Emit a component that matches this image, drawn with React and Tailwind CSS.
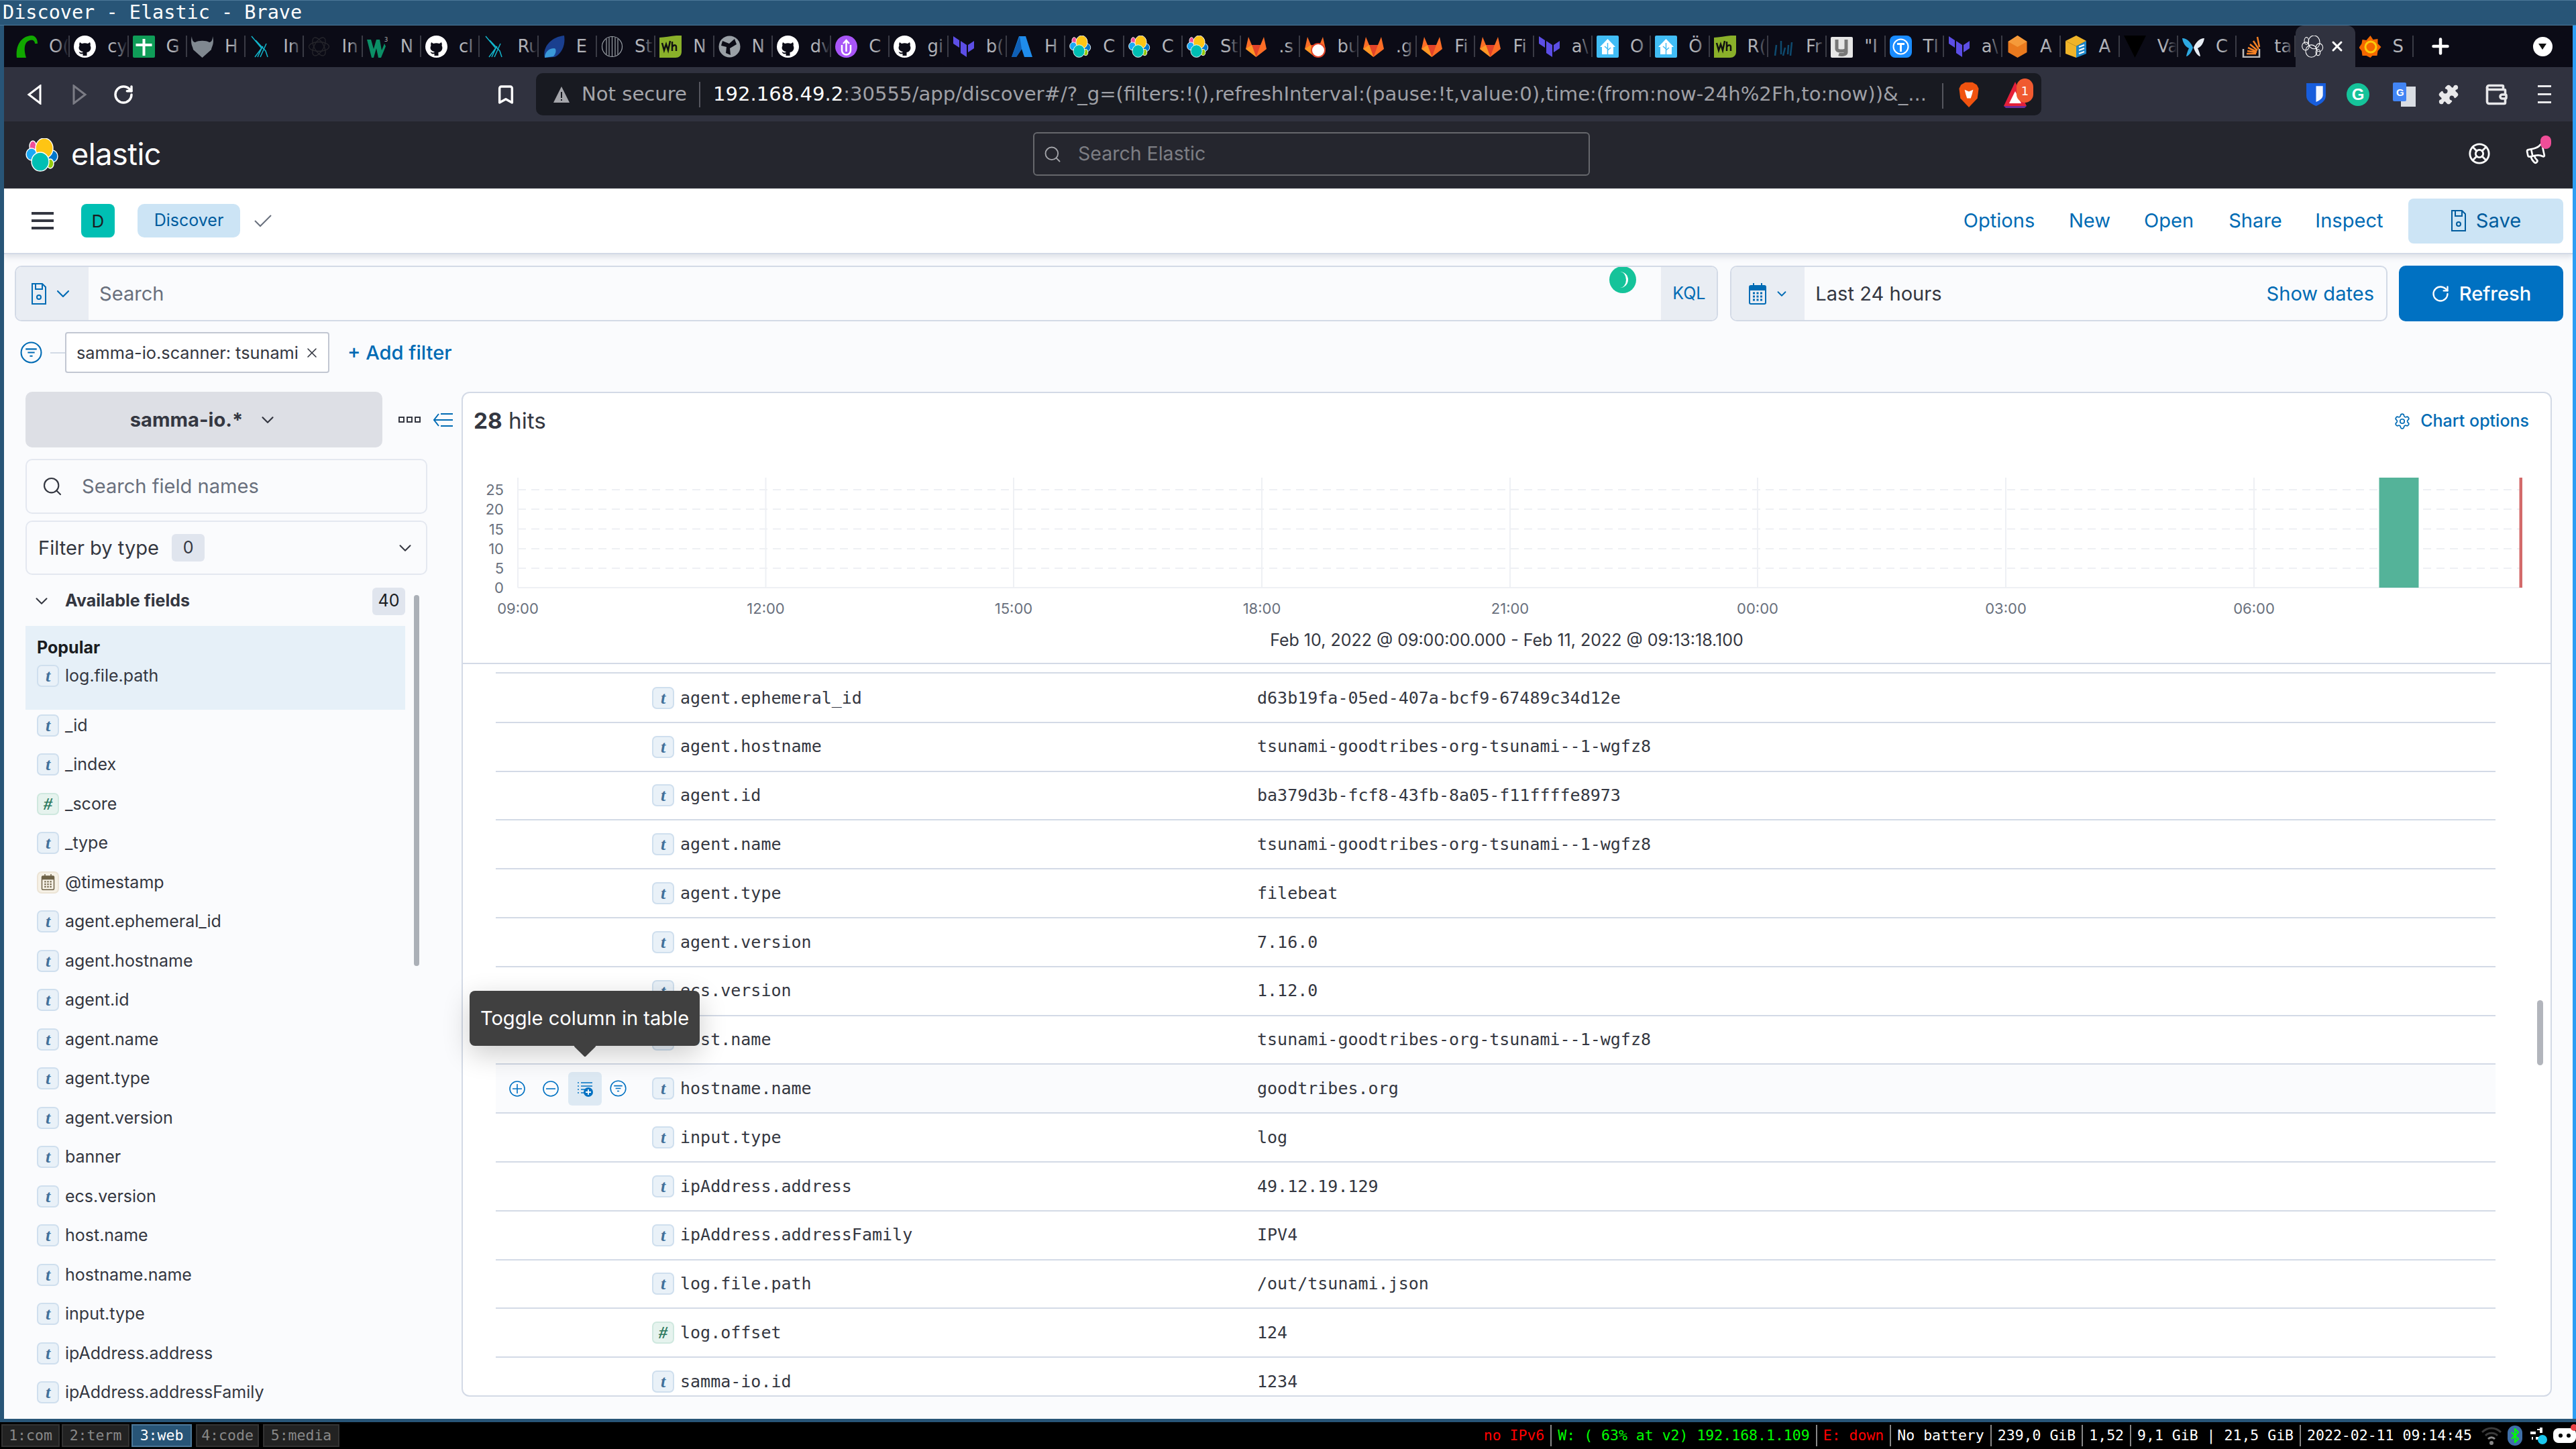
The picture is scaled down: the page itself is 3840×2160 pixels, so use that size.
import React from "react";
import {
  Bookmark,
  ChevronDown,
  Plus,
  RotateCw,
  Search,
  Settings,
  X,
  LifeBuoy,
  Megaphone,
  Wallet,
  Puzzle,
} from "lucide-react";

const sans = "font-['Inter','Liberation_Sans',sans-serif]";
const mono = "font-['DejaVu_Sans_Mono',monospace]";

const GitHub = () => (
  <svg viewBox="0 0 33 33" className="w-[33px] h-[33px]">
    <circle cx="16.5" cy="16.5" r="16.5" fill="#fff" />
    <path d="M9 10l3 2c3-1 6-1 9 0l3-2c1 2 1 4 .5 5 2 3 1 9-5 10v5h-6v-3c-3 1-5 0-6-3 2 1 3 2 6 1v-1c-6-1-7-6-5-9-.5-1-.5-3 .5-5z" fill="#0b0b16" />
  </svg>
);

const Elastic = ({ outline }) => {
  const s = outline ? { fill: "none", stroke: "#fff", strokeWidth: 1.6 } : { stroke: "#fff", strokeWidth: 1.4 };
  return (
    <svg viewBox="0 0 50 50" className="w-full h-full">
      <ellipse cx="11" cy="12" rx="5" ry="8" fill="#f04e98" {...s} />
      <ellipse cx="9" cy="24" rx="8" ry="9" fill="#1ba9f5" {...s} />
      <ellipse cx="40" cy="27" rx="8" ry="9" fill="#0077cc" {...s} />
      <ellipse cx="37" cy="38" rx="5" ry="7" fill="#93c90e" {...s} />
      <ellipse cx="28" cy="15" rx="13" ry="15" fill="#fec514" {...s} />
      <ellipse cx="22" cy="35" rx="13" ry="14" fill="#00bfb3" {...s} />
    </svg>
  );
};

const Terraform = () => (
  <svg viewBox="0 0 33 33" className="w-[33px] h-[33px]">
    <path d="M1 1l9 6v11L1 12zM12 8l9 6v18l-9-6zM23 14l9-6v11l-9 6z" fill="#5c4ee5" />
  </svg>
);

const GitLab = ({ bad }) => (
  <svg viewBox="0 0 33 33" className="w-[33px] h-[33px]">
    <path d="M16.5 32L1 20 5 2l5 12h13l5-12 4 18z" fill="#fc6d26" />
    <path d="M16.5 32l-6.500-18h13z" fill="#e24329" />
    <path d="M16.5 32L1 20l9-6z" fill="#fca326" opacity=".8" />
    {bad && <circle cx="21" cy="22" r="10" fill="#fff" stroke="#e24329" strokeWidth="2" />}
  </svg>
);

const HomeAssistant = () => (
  <svg viewBox="0 0 33 33" className="w-[33px] h-[33px]">
    <rect width="33" height="33" rx="2" fill="#41bdf5" />
    <path d="M16.500 5L28 17h-3v11H8V17H5z" fill="#fff" />
    <path d="M16.500 11v17M12 16l4.500 4M21 18l-4.500 4" stroke="#41bdf5" strokeWidth="1.500" />
  </svg>
);

const WiresharkBox = () => (
  <svg viewBox="0 0 33 33" className="w-[33px] h-[33px]">
    <path d="M0 3c10 0 22-4 33-3v24c0 6-4 9-9 9H0z" fill="#8ab02a" />
    <path d="M4 11l3 11 3-9 3 9 3-14M19 9v14M19 17c3-4 6-3 6 0v6" fill="none" stroke="#111" strokeWidth="2.500" />
  </svg>
);

// favicons of the tab strip, a small sketch each
const favicons = {
  swoosh: (
    <svg viewBox="0 0 33 33" className="w-[33px] h-[33px]">
      <path d="M2 33C0 15 8 1 24 0c6 0 9 6 9 12h-4c0-4-3-6-7-5C13 9 12 20 16 33z" fill="#11a800" />
    </svg>
  ),
  github: <GitHub />,
  cross: (
    <svg viewBox="0 0 33 33" className="w-[33px] h-[33px]">
      <rect width="33" height="33" rx="2" fill="#0f9d58" />
      <path d="M14.500 5h4v7h10v4h-10v14h-4V16h-10v-4h10z" fill="#fff" />
    </svg>
  ),
  viking: (
    <svg viewBox="0 0 33 33" className="w-[33px] h-[33px]">
      <path d="M1 1c0 7 3 9 5 9 5-3 16-3 21 0 2 0 5-2 5-9 3 12-2 16-2 20L16.500 33 3 21C3 17-2 13 1 1z" fill="#808890" />
    </svg>
  ),
  kube: (
    <svg viewBox="0 0 33 33" className="w-[33px] h-[33px]" fill="none" stroke="#12b5cb" strokeWidth="1.500">
      <path d="M3 1l15 18-6 13M9 7l15 16 3 9M8 32l12-16M16 32l9-20" />
    </svg>
  ),
  atom: (
    <svg viewBox="0 0 33 33" className="w-[33px] h-[33px]" fill="none" stroke="#26262c" strokeWidth="1.300">
      <ellipse cx="16.500" cy="16.500" rx="15" ry="7" />
      <ellipse cx="16.500" cy="16.500" rx="15" ry="7" transform="rotate(60 16.500 16.500)" />
      <ellipse cx="16.500" cy="16.500" rx="15" ry="7" transform="rotate(120 16.500 16.500)" />
    </svg>
  ),
  w3: (
    <svg viewBox="0 0 33 33" className="w-[33px] h-[33px]">
      <path d="M0 6h6l4 14 4-14h5l3 16 4-10 2 4-7 17h-4l-3-14-4 14H7z" fill="#0b8f66" />
      <text x="26" y="9" fontSize="9" fill="#bbb">3</text>
    </svg>
  ),
  wave: (
    <svg viewBox="0 0 33 33" className="w-[33px] h-[33px]">
      <path d="M3 33C-1 18 12 2 32 0c2 12-2 26-14 32z" fill="#1a3f8f" />
      <path d="M3 33c0-8 6-14 14-14 4 0 3 8-1 12z" fill="#3a9ad9" />
    </svg>
  ),
  stripes: (
    <svg viewBox="0 0 33 33" className="w-[33px] h-[33px]" fill="none" stroke="#9aa0a6" strokeWidth="1.200">
      <circle cx="16.500" cy="16.500" r="15" />
      <path d="M8 5v23M12 3v27M16.500 2v29M21 3v27M25 5v23" />
    </svg>
  ),
  wh: <WiresharkBox />,
  globe: (
    <svg viewBox="0 0 33 33" className="w-[33px] h-[33px]">
      <circle cx="16.500" cy="16.500" r="16" fill="#9aa0a6" />
      <path d="M6 8l10 4 8-7 3 8-10 6 1 10-7-3 1-9-8-2z" fill="#0b0b16" />
    </svg>
  ),
  upload: (
    <svg viewBox="0 0 33 33" className="w-[33px] h-[33px]">
      <circle cx="16.500" cy="16.500" r="16.500" fill="#a855f7" />
      <path d="M10 14v8a6.500 6.500 0 0 0 13 0v-8M16.500 24V7M12 12l4.500-5 4.500 5" fill="none" stroke="#fff" strokeWidth="2.500" />
    </svg>
  ),
  terraform: <Terraform />,
  azure: (
    <svg viewBox="0 0 33 33" className="w-[33px] h-[33px]">
      <path d="M12 1h10l10 31H20L16 20l-8 12H1z" fill="#1f8ceb" />
      <path d="M13 1L1 32h7l8-12z" fill="#0f5fb5" />
    </svg>
  ),
  elastic: (
    <div className="w-[33px] h-[33px]">
      <Elastic />
    </div>
  ),
  gitlab: <GitLab />,
  gitlabBad: <GitLab bad />,
  ha: <HomeAssistant />,
  inkblue: (
    <svg viewBox="0 0 33 33" className="w-[33px] h-[33px]" fill="none" stroke="#0e4a6e" strokeWidth="2.500">
      <path d="M6 14l-2 16M13 8v20M19 18l-3 12M24 14l-1 14M29 10l-2 20" />
    </svg>
  ),
  yBox: (
    <svg viewBox="0 0 33 33" className="w-[33px] h-[33px]">
      <rect y="2" width="33" height="31" rx="2" fill="#e6e6e6" />
      <path d="M9 6v14c0 4 14 4 14 0V6M23 20v5c0 4-8 4-11 3" fill="none" stroke="#777" strokeWidth="5" />
    </svg>
  ),
  tBlue: (
    <svg viewBox="0 0 33 33" className="w-[33px] h-[33px]">
      <rect width="33" height="33" rx="8" fill="#1a8cff" />
      <circle cx="16.500" cy="16.500" r="11" fill="none" stroke="#fff" strokeWidth="2" />
      <path d="M11 11h11v3h-4v10h-3V14h-4z" fill="#fff" />
    </svg>
  ),
  hex: (
    <svg viewBox="0 0 33 33" className="w-[33px] h-[33px]">
      <path d="M16.500 0l14 9v16l-14 8-14-8V9z" fill="#ea7a1e" />
      <path d="M2.500 9l14 8 14-8-14-9z" fill="#f59a3a" />
    </svg>
  ),
  box: (
    <svg viewBox="0 0 33 33" className="w-[33px] h-[33px]">
      <path d="M1 8L17 0l15 8-15 8z" fill="#f0b429" />
      <path d="M1 8l16 8v17L1 27z" fill="#f0b429" />
      <path d="M17 16l15-8v19l-15 6z" fill="#1c86c8" />
      <path d="M21 17l8-3M21 22l8-3M21 27l8-3" stroke="#fff" strokeWidth="2" />
    </svg>
  ),
  vault: (
    <svg viewBox="0 0 33 33" className="w-[33px] h-[33px]">
      <path d="M0 0h33L16.500 33z" fill="#000" />
    </svg>
  ),
  butterfly: (
    <svg viewBox="0 0 33 33" className="w-[33px] h-[33px]">
      <path d="M0 4c8 0 14 8 16 14-2 7-7 13-10 13 1-5 2-8 4-12C5 17 1 11 0 4z" fill="#2da8e0" />
      <path d="M33 4c-8 0-14 8-16 14 2 7 7 13 10 13-1-5-2-8-4-12 5-2 9-8 10-15z" fill="#e8eef5" />
    </svg>
  ),
  so: (
    <svg viewBox="0 0 33 33" className="w-[33px] h-[33px]" fill="none">
      <path d="M4 20v12h24V20" stroke="#bcbbbb" strokeWidth="2.500" />
      <path d="M9 27h14M10 23l14 2M11 18l13 6M14 13l11 9M19 8l8 12M25 2l3 15" stroke="#f48024" strokeWidth="2.500" />
    </svg>
  ),
  grafana: (
    <svg viewBox="0 0 33 33" className="w-[33px] h-[33px]">
      <path d="M16.500 0l4 6 7-1 0 7 5 5-5 6-1 7-7 0-3 3-6-3-6 0-1-7-4-5 4-6 1-6 6 1z" fill="#f46800" />
      <circle cx="17" cy="17" r="8" fill="none" stroke="#fbca0a" strokeWidth="3" />
    </svg>
  ),
};

const tabs = [
  ["swoosh", "O("], ["github", "cy"], ["cross", "G"], ["viking", "H"], ["kube", "In"], ["atom", "In"],
  ["w3", "N"], ["github", "cl"], ["kube", "Ru"], ["wave", "E"], ["stripes", "St"], ["wh", "N"],
  ["globe", "N"], ["github", "dv"], ["upload", "C"], ["github", "gi"], ["terraform", "b("], ["azure", "H"],
  ["elastic", "C"], ["elastic", "C"], ["elastic", "St"], ["gitlab", ".s"], ["gitlabBad", "bu"], ["gitlab", ".g"],
  ["gitlab", "Fi"], ["gitlab", "Fi"], ["terraform", "a\\"], ["ha", "O"], ["ha", "Ö"], ["wh", "R("],
  ["inkblue", "Fr"], ["yBox", "\"I"], ["tBlue", "Tl"], ["terraform", "a\\"], ["hex", "A"], ["box", "A"],
  ["vault", "Va"], ["butterfly", "C"], ["so", "ta"],
];

const TabStrip = () => (
  <div className="h-[62px] bg-[#0b0b16] flex pl-[11px] shrink-0">
    {tabs.map(([icon, label], i) => (
      <div key={i} className="w-[87.3px] h-[62px] shrink-0 flex items-center pl-[6px] overflow-hidden relative">
        <div className="w-[33px] h-[33px] shrink-0">{favicons[icon]}</div>
        <span className="ml-[17px] text-[26px] leading-none text-[#b4b5ba] font-['DejaVu_Sans',sans-serif] whitespace-nowrap">{label}</span>
        <div className="absolute right-[2px] top-0 h-[62px] w-[18px] bg-linear-to-r from-transparent to-[#0b0b16]" />
        <div className="absolute right-0 top-[15px] h-[32px] w-[2px] bg-[#3a3b45]" />
      </div>
    ))}
    <div className="w-[89px] h-[62px] shrink-0 bg-[#30323f] rounded-t-[12px] flex items-center pl-[9px]">
      <div className="w-[33px] h-[33px]">
        <Elastic outline />
      </div>
      <X size={24} strokeWidth={3} className="ml-[8px] text-white" />
    </div>
    <div className="w-[87px] h-[62px] shrink-0 flex items-center pl-[6px] relative">
      <div className="w-[33px] h-[33px] shrink-0">{favicons.grafana}</div>
      <span className="ml-[17px] text-[26px] leading-none text-[#b4b5ba] font-['DejaVu_Sans',sans-serif]">S</span>
      <div className="absolute right-0 top-[15px] h-[32px] w-[2px] bg-[#3a3b45]" />
    </div>
    <Plus size={36} strokeWidth={3} className="ml-[22px] mt-[13px] text-white" />
    <div className="ml-[120px] mt-[17px] w-[29px] h-[29px] rounded-full bg-white flex items-center justify-center">
      <div className="w-0 h-0 border-l-[6px] border-r-[6px] border-t-[9px] border-l-transparent border-r-transparent border-t-[#111]" />
    </div>
  </div>
);

const BrowserBar = () => (
  <div className="h-[81px] bg-[#30323f] flex items-center shrink-0 relative">
    <svg viewBox="0 0 24 30" className="w-[24px] h-[30px] ml-[34px]" fill="none" stroke="#fff" strokeWidth="3">
      <path d="M20 2v26L3 15z" />
    </svg>
    <svg viewBox="0 0 24 30" className="w-[24px] h-[30px] ml-[42px]" fill="none" stroke="#7b7c85" strokeWidth="3">
      <path d="M4 2v26l17-13z" />
    </svg>
    <RotateCw size={32} strokeWidth={2.6} className="ml-[38px] text-white" />
    <Bookmark size={32} strokeWidth={2.6} className="ml-[538px] text-white" />
    <div className="ml-[29px] w-[2244px] h-[63px] bg-[#181a21] rounded-[10px] flex items-center font-['DejaVu_Sans',sans-serif] text-[29.1px] relative">
      <svg viewBox="0 0 26 26" className="w-[26px] h-[26px] ml-[25px] shrink-0">
        <path d="M13 1l12 24H1z" fill="#a4a5aa" />
        <path d="M12 9h2v9h-2zM12 20h2v2h-2z" fill="#181a21" />
      </svg>
      <span className="ml-[17px] text-[#a4a5aa] whitespace-nowrap">Not secure</span>
      <div className="ml-[18px] w-[2px] h-[38px] bg-[#55565e] shrink-0" />
      <span className="ml-[19px] whitespace-nowrap text-[#9fa0a6]">
        <span className="text-white">192.168.49.2</span>
        :30555/app/discover#/?_g=(filters:!(),refreshInterval:(pause:!t,value:0),time:(from:now-24h%2Fh,to:now))&amp;_...
      </span>
      <div className="absolute left-[2096px] top-[15px] w-[2px] h-[38px] bg-[#55565e]" />
      <svg viewBox="0 0 34 44" className="absolute left-[2119px] top-[12px] w-[34px] h-[40px]">
        <path d="M4 6l7-4h12l7 4 3 6-2 16-14 15L3 28 1 12z" fill="#f1530f" />
        <path d="M10 14l7 3 7-3-2 8-2 6h-6l-2-6z" fill="#fff" />
      </svg>
      <svg viewBox="0 0 40 40" className="absolute left-[2185px] top-[13px] w-[40px] h-[40px]">
        <path d="M20 0l17 36H3z" fill="#e5203a" />
        <path d="M20 14l9 18H11z" fill="#fff" />
        <path d="M3 36h34l-3 3H6z" fill="#6b2f9a" />
      </svg>
      <div className="absolute left-[2207px] top-[8px] w-[25px] h-[36px] rounded-full bg-[#f05a30] text-white text-[18px] flex items-center justify-center">1</div>
    </div>
    {/* extensions */}
    <svg viewBox="0 0 34 40" className="ml-[393px] w-[33px] h-[34px]">
      <path d="M0 0h34v22c0 9-8 14-17 18C8 36 0 31 0 22z" fill="#175ddc" />
      <path d="M17 5v28c7-3 12-7 12-12V5z" fill="#fff" opacity=".95" />
    </svg>
    <div className="ml-[29px] w-[34px] h-[34px] rounded-full bg-[#15c39a] flex items-center justify-center text-white font-bold text-[24px] font-['Liberation_Sans',sans-serif]">G</div>
    <svg viewBox="0 0 34 36" className="ml-[35px] w-[34px] h-[36px]">
      <rect x="12" y="6" width="22" height="30" fill="#d9dde3" />
      <rect width="20" height="28" rx="2" fill="#4285f4" />
      <text x="5" y="20" fontSize="15" fontWeight="700" fill="#fff" fontFamily="Liberation Sans">G</text>
    </svg>
    <Puzzle size={34} fill="#e8e8ea" strokeWidth={0} className="ml-[32px] text-[#e8e8ea]" />
    <Wallet size={36} strokeWidth={2.4} className="ml-[36px] text-[#e8e8ea]" />
    <div className="ml-[44px] flex flex-col gap-[9px]">
      <div className="w-[20px] h-[3px] bg-[#e8e8ea]" />
      <div className="w-[20px] h-[3px] bg-[#e8e8ea]" />
      <div className="w-[20px] h-[3px] bg-[#e8e8ea]" />
    </div>
  </div>
);

const KibanaHeader = () => (
  <div className={`h-[100px] bg-[#25262e] flex items-center shrink-0 relative ${sans}`}>
    <div className="w-[50px] h-[50px] ml-[32px]">
      <Elastic />
    </div>
    <span className="ml-[18px] w-[132px] text-[45px] leading-none text-white tracking-[-0.5px] pb-[3px]">elastic</span>
    <div className="ml-[1302px] mb-[3px] w-[830px] h-[65px] rounded-[6px] border-2 border-[#66676c] flex items-center">
      <Search size={28} className="ml-[13px] text-[#a4a5aa]" strokeWidth={1.6} />
      <span className="ml-[24px] text-[28.5px] text-[#7d7e84]">Search Elastic</span>
    </div>
    <LifeBuoy size={34} strokeWidth={2} className="absolute left-[3673px] top-[31px] text-white" />
    <Megaphone size={32} strokeWidth={2} className="absolute left-[3758px] top-[32px] text-white -rotate-12" />
    <div className="absolute left-[3781px] top-[21px] w-[16px] h-[20px] rounded-full bg-[#f04e98]" />
  </div>
);

const DiskIcon = ({ className }) => (
  <svg viewBox="0 0 24 32" className={className} fill="none" stroke="currentColor" strokeWidth="2">
    <path d="M2 1h15l5 5v25H2z" />
    <path d="M7 1v8h10V1" />
    <circle cx="12" cy="21" r="3" />
  </svg>
);

const CalIcon = ({ className }) => (
  <svg viewBox="0 0 26 32" className={className}>
    <rect x="1" y="4" width="24" height="27" rx="2" fill="none" stroke="currentColor" strokeWidth="2" />
    <rect x="1" y="4" width="24" height="7" fill="currentColor" />
    <path d="M7 0v6M19 0v6" stroke="currentColor" strokeWidth="2" />
    <path d="M6 15h14M6 20h14M6 25h14" stroke="currentColor" strokeWidth="3" strokeDasharray="3 2.500" />
  </svg>
);

const AppNav = () => (
  <div className={`h-[98px] bg-white flex items-center shrink-0 shadow-[0_4px_8px_rgba(152,162,179,0.3)] border-b-2 border-[#d3dae6] relative z-10 ${sans}`}>
    <div className="ml-[41px] flex flex-col gap-[7px]">
      <div className="w-[33px] h-[4px] bg-[#343741]" />
      <div className="w-[33px] h-[4px] bg-[#343741]" />
      <div className="w-[33px] h-[4px] bg-[#343741]" />
    </div>
    <div className="ml-[41px] w-[50px] h-[50px] rounded-[8px] bg-[#00bfb3] flex items-center justify-center text-[26px] text-[#1a1c21]">D</div>
    <div className="ml-[34px] w-[153px] h-[50px] rounded-[10px] bg-[#cce4f5] flex items-center justify-center text-[25px] text-[#005c9e]">Discover</div>
    <svg viewBox="0 0 26 20" className="ml-[21px] w-[26px] h-[20px]" fill="none" stroke="#69707d" strokeWidth="2">
      <path d="M1 10l8 8L25 2" />
    </svg>
    <div className="ml-auto flex items-center text-[29.1px] text-[#006bb4]">
      <span className="w-[172px] text-center">Options</span>
      <span className="w-[98px] text-center">New</span>
      <span className="w-[138px] text-center">Open</span>
      <span className="w-[120px] text-center">Share</span>
      <span className="w-[160px] text-center">Inspect</span>
      <div className="ml-[8px] mr-[14px] w-[231px] h-[67px] rounded-[8px] bg-[#cce4f5] flex items-center justify-center gap-[14px] text-[#005c9e]">
        <DiskIcon className="w-[24px] h-[32px]" />
        <span>Save</span>
      </div>
    </div>
  </div>
);

const QueryRow = () => (
  <div className="flex h-[83px] mt-[17px] pl-[16px] pr-[14px] shrink-0">
    <div className="flex w-[2540px] border-2 border-[#d3dae6] rounded-[10px] overflow-hidden">
      <div className="w-[108px] bg-[#e9edf3] flex items-center justify-center gap-[8px] text-[#006bb4]">
        <DiskIcon className="w-[24px] h-[32px]" />
        <ChevronDown size={32} strokeWidth={1.6} />
      </div>
      <div className="flex-1 flex items-center pl-[16px] text-[29.1px] text-[#69707d] relative">
        Search
        <div className="absolute left-[2267px] top-[-1px] w-[40px] h-[40px] rounded-full bg-[#15c39a] flex items-center justify-center">
          <div className="w-[16px] h-[24px] rounded-r-full border-r-[3px] border-white" />
        </div>
      </div>
      <div className="w-[83px] bg-[#e9edf3] flex items-center justify-center text-[25px] text-[#006bb4]">KQL</div>
    </div>
    <div className="ml-[18px] w-[980px] flex border-2 border-[#d3dae6] rounded-[10px] overflow-hidden">
      <div className="w-[109px] bg-[#e9edf3] flex items-center justify-center gap-[10px] text-[#006bb4]">
        <CalIcon className="w-[30px] h-[32px]" />
        <ChevronDown size={22} strokeWidth={2} />
      </div>
      <div className="flex-1 flex items-center justify-between pl-[16px] pr-[18px] text-[29.1px]">
        <span className="text-[#343741]">Last 24 hours</span>
        <span className="text-[#006bb4]">Show dates</span>
      </div>
    </div>
    <div className="ml-[17px] w-[245px] rounded-[10px] bg-[#0071c2] flex items-center justify-center gap-[14px] text-white text-[29.1px] font-medium">
      <RotateCw size={28} strokeWidth={2} />
      Refresh
    </div>
  </div>
);

const FilterIcon = ({ className }) => (
  <svg viewBox="0 0 32 32" className={className} fill="none" stroke="currentColor" strokeWidth="2">
    <circle cx="16" cy="16" r="14.500" />
    <path d="M8 11h16M11 16h10M14 21h4" />
  </svg>
);

const FilterRow = () => (
  <div className="flex items-center h-[61px] mt-[16px] pl-[24px] shrink-0 text-[#006bb4]">
    <FilterIcon className="w-[33px] h-[33px]" />
    <div className="ml-[12px] w-[22px] h-[2px] bg-[#d3dae6]" />
    <div className="w-[394px] h-[61px] border-2 border-[#c2c7d2] rounded-[4px] bg-[#fff] flex items-center pl-[15px] text-[25.3px] text-[#343741] whitespace-nowrap">
      samma-io.scanner: tsunami
      <X size={24} strokeWidth={1.6} className="ml-[8px] shrink-0" />
    </div>
    <span className="ml-[27px] text-[29.1px] font-medium">+ Add filter</span>
  </div>
);

const TypeIcon = ({ type = "t" }) => {
  if (type === "date")
    return (
      <div className="w-[33px] h-[33px] rounded-[7px] border-2 border-[#ece4d6] bg-[#f6f1e6] flex items-center justify-center shrink-0 text-[#6e6247]">
        <CalIcon className="w-[21px] h-[24px]" />
      </div>
    );
  const green = type === "#";
  return (
    <div
      className={
        green
          ? "w-[33px] h-[33px] rounded-[7px] border-2 border-[#cfe8df] bg-[#e6f3ee] flex items-center justify-center shrink-0 text-[#2f7a5f] text-[26px] italic font-bold font-['Liberation_Serif',serif]"
          : "w-[33px] h-[33px] rounded-[7px] border-2 border-[#cfdfee] bg-[#e9f1f8] flex items-center justify-center shrink-0 text-[#41709a] text-[26px] italic font-bold font-['Liberation_Serif',serif]"
      }
    >
      {type}
    </div>
  );
};

const fields = [
  ["_id"], ["_index"], ["_score", "#"], ["_type"], ["@timestamp", "date"], ["agent.ephemeral_id"],
  ["agent.hostname"], ["agent.id"], ["agent.name"], ["agent.type"], ["agent.version"], ["banner"],
  ["ecs.version"], ["host.name"], ["hostname.name"], ["input.type"], ["ipAddress.address"], ["ipAddress.addressFamily"],
];

const Sidebar = () => (
  <div className="w-[682px] shrink-0 pl-[32px] relative h-[1530px]">
    <div className="flex items-center">
      <div className="w-[532px] h-[83px] rounded-[10px] bg-[#dddfe5] flex items-center justify-center gap-[22px] text-[29.1px] font-bold text-[#343741]">
        samma-io.*
        <ChevronDown size={30} strokeWidth={1.8} />
      </div>
      <div className="ml-[24px] flex gap-[3px]">
        <div className="w-[9px] h-[9px] border-2 border-[#343741]" />
        <div className="w-[9px] h-[9px] border-2 border-[#343741]" />
        <div className="w-[9px] h-[9px] border-2 border-[#343741]" />
      </div>
      <svg viewBox="0 0 30 22" className="ml-[18px] w-[30px] h-[22px]" fill="none" stroke="#006bb4" strokeWidth="2">
        <path d="M9 2L2 11l7 9M2 11h28M12 2h18M12 20h18" />
      </svg>
    </div>
    <div className="mt-[17px] w-[599px] h-[82px] rounded-[10px] border-2 border-[#e4e8f0] flex items-center pl-[22px] text-[29.1px] text-[#69707d]">
      <Search size={32} strokeWidth={1.6} className="text-[#343741]" />
      <span className="ml-[28px]">Search field names</span>
    </div>
    <div className="mt-[10px] w-[599px] h-[81px] rounded-[10px] border-2 border-[#e4e8f0] flex items-center pl-[17px] pr-[16px] text-[29.1px] text-[#343741]">
      Filter by type
      <div className="ml-[19px] w-[49px] h-[41px] rounded-[6px] bg-[#e0e5ee] flex items-center justify-center text-[25px]">0</div>
      <ChevronDown size={30} strokeWidth={1.6} className="ml-auto" />
    </div>
    <div className="mt-[18px] w-[566px] h-[42px] flex items-center">
      <ChevronDown size={30} strokeWidth={1.6} className="ml-[9px] text-[#343741]" />
      <span className="ml-[20px] text-[25px] font-bold text-[#343741]">Available fields</span>
      <div className="ml-auto w-[49px] h-[41px] rounded-[6px] bg-[#e0e5ee] flex items-center justify-center text-[25px] text-[#1a1c21]">40</div>
    </div>
    <div className="mt-[16px] w-[566px] h-[125px] bg-[#e6f0f8] pl-[17px] pt-[18px]">
      <div className="text-[25px] leading-[28px] font-bold text-[#1a1c21]">Popular</div>
      <div className="flex items-center mt-[12px] h-[33px]">
        <TypeIcon />
        <span className="ml-[9px] text-[25px] text-[#343741]">log.file.path</span>
      </div>
    </div>
    <div className="mt-[-6px] h-[1064px] overflow-hidden pt-[0px]">
      {fields.map(([name, type], i) => (
        <div key={i} className="h-[58.500px] flex items-center pl-[17px]">
          <TypeIcon type={type} />
          <span className="ml-[9px] text-[25px] text-[#343741] whitespace-nowrap">{name}</span>
        </div>
      ))}
    </div>
    <div className="absolute left-[611px] top-[303px] w-[8px] h-[553px] rounded-full bg-[#abb0b7]" />
  </div>
);

const hGrid = [731, 760, 789.5, 819, 848];
const vGrid = [
  [1140.5, "12:00"], [1510, "15:00"], [1880, "18:00"], [2250, "21:00"],
  [2619, "00:00"], [2989, "03:00"], [3359, "06:00"],
];

// page coordinates minus the origin of the chart (689, 700)
const Chart = () => (
  <svg viewBox="689 700 3114 230" className="w-[3114px] h-[230px] shrink-0 font-['Inter',sans-serif]">
    {hGrid.map((y) => (
      <line key={y} x1="771" x2="3759" y1={y} y2={y} stroke="#eef0f4" strokeWidth="2" strokeDasharray="12 8" />
    ))}
    <line x1="771" x2="771" y1="713" y2="877" stroke="#eef0f4" strokeWidth="2" />
    {vGrid.map(([x]) => (
      <line key={x} x1={x} x2={x} y1="713" y2="877" stroke="#eef0f4" strokeWidth="2" />
    ))}
    <line x1="771" x2="3759" y1="877" y2="877" stroke="#eef0f4" strokeWidth="2" />
    <rect x="3545.500" y="713" width="59" height="164" fill="#54b399" />
    <rect x="3754.500" y="713" width="4.500" height="164" fill="#d36a6a" />
    {[[25, 731], [20, 760], [15, 789.5], [10, 819], [5, 848], [0, 877]].map(([v, y]) => (
      <text key={v} x="750" y={y + 8} textAnchor="end" fontSize="22" fill="#69707d">{v}</text>
    ))}
    <text x="771" y="916" textAnchor="middle" fontSize="22" fill="#69707d">09:00</text>
    {vGrid.map(([x, label]) => (
      <text key={label} x={x} y="916" textAnchor="middle" fontSize="22" fill="#69707d">{label}</text>
    ))}
  </svg>
);

const rows = [
  ["agent.ephemeral_id", "d63b19fa-05ed-407a-bcf9-67489c34d12e"],
  ["agent.hostname", "tsunami-goodtribes-org-tsunami--1-wgfz8"],
  ["agent.id", "ba379d3b-fcf8-43fb-8a05-f11ffffe8973"],
  ["agent.name", "tsunami-goodtribes-org-tsunami--1-wgfz8"],
  ["agent.type", "filebeat"],
  ["agent.version", "7.16.0"],
  ["ecs.version", "1.12.0"],
  ["host.name", "tsunami-goodtribes-org-tsunami--1-wgfz8"],
  ["hostname.name", "goodtribes.org", "t", true],
  ["input.type", "log"],
  ["ipAddress.address", "49.12.19.129"],
  ["ipAddress.addressFamily", "IPV4"],
  ["log.file.path", "/out/tsunami.json"],
  ["log.offset", "124", "#"],
  ["samma-io.id", "1234"],
];

const RowActions = () => (
  <div className="w-[233px] flex items-center text-[#0071c2] shrink-0">
    <svg viewBox="0 0 24 24" className="ml-[20px] w-[24px] h-[24px]" fill="none" stroke="currentColor" strokeWidth="1.600">
      <circle cx="12" cy="12" r="11" />
      <path d="M12 5v14M5 12h14" />
    </svg>
    <svg viewBox="0 0 24 24" className="ml-[26px] w-[24px] h-[24px]" fill="none" stroke="currentColor" strokeWidth="1.600">
      <circle cx="12" cy="12" r="11" />
      <path d="M5 12h14" />
    </svg>
    <div className="ml-[14px] w-[50px] h-[50px] rounded-[6px] bg-[#dde9f3] flex items-center justify-center">
      <svg viewBox="0 0 24 24" className="w-[24px] h-[24px]">
        <path d="M6 3h17M6 8h17M6 13h7M6 18h5M1 3h2M1 8h2M1 13h2M1 18h2" stroke="currentColor" strokeWidth="1.600" />
        <circle cx="17" cy="17" r="7" fill="currentColor" />
        <path d="M17 13v8M13 17h8" stroke="#fff" strokeWidth="1.800" />
      </svg>
    </div>
    <FilterIcon className="ml-[12px] w-[25px] h-[25px]" />
  </div>
);

const DocTable = () => (
  <div className="h-[1077px] ml-[49px] mr-[82px] mt-[12px] border-t-2 border-[#d3dae6] overflow-hidden pt-[1px]">
    {rows.map(([name, value, type, hover]) => (
      <div
        key={name}
        className={
          hover
            ? "h-[72.800px] border-b-2 border-[#d3dae6] flex items-center bg-[#fafbfd] text-[25px] text-[#343741]"
            : "h-[72.800px] border-b-2 border-[#d3dae6] flex items-center text-[25px] text-[#343741]"
        }
      >
        {hover ? <RowActions /> : <div className="w-[233px] shrink-0" />}
        <TypeIcon type={type || "t"} />
        <span className={`ml-[9px] w-[860px] shrink-0 ${mono}`}>{name}</span>
        <span className={mono}>{value}</span>
      </div>
    ))}
  </div>
);

const HitsPanel = () => (
  <div className="w-[3116px] h-[1498px] bg-white border-2 border-[#d3dae6] rounded-[12px] flex flex-col overflow-hidden relative">
    <div className="h-[113px] flex items-start justify-between shrink-0 pt-[21px] pl-[16px] pr-[32px]">
      <div className="text-[33.3px] leading-[40px] text-[#343741]">
        <span className="font-bold">28</span> hits
      </div>
      <div className="flex items-center gap-[14px] text-[25px] font-medium text-[#006bb4] mt-[2px]">
        <Settings size={26} strokeWidth={1.600} />
        Chart options
      </div>
    </div>
    <Chart />
    <div className="text-center text-[25px] leading-[30px] text-[#343741] h-[59px] shrink-0 pt-[10px]">
      Feb 10, 2022 @ 09:00:00.000 - Feb 11, 2022 @ 09:13:18.100
    </div>
    <div className="border-t-2 border-[#d3dae6] flex-1 min-h-0">
      <DocTable />
    </div>
    <div className="absolute left-[3092px] top-[905px] w-[9px] h-[97px] rounded-full bg-[#b2b5bc]" />
  </div>
);

const Tooltip = () => (
  <div className="absolute left-[694px] top-[1098px] w-[343px] h-[82px] rounded-[8px] bg-[#404040] flex items-center justify-center text-white text-[29.1px] shadow-[0_12px_40px_rgba(0,0,0,0.2)] z-20">
    Toggle column in table
    <div className="absolute left-[160px] bottom-[-12px] w-[24px] h-[24px] bg-[#404040] rotate-45 rounded-[2px]" />
  </div>
);

const StatusBar = () => {
  const sep = <span className="w-[2px] h-[32px] bg-[#888] mx-[9px]" />;
  return (
    <div className={`h-[40px] bg-black flex items-center shrink-0 text-[21.500px] whitespace-pre ${mono}`}>
      <div className="flex items-center gap-[3px] pl-[2px] text-[#888]">
        <div className="w-[87px] h-[34px] bg-[#222] border-2 border-[#333] flex items-center justify-center">1:com</div>
        <div className="w-[101px] h-[34px] bg-[#222] border-2 border-[#333] flex items-center justify-center">2:term</div>
        <div className="w-[90px] h-[34px] bg-[#285577] border-2 border-[#4c7899] text-white flex items-center justify-center">3:web</div>
        <div className="w-[94px] h-[34px] bg-[#222] border-2 border-[#333] flex items-center justify-center ml-[3px]">4:code</div>
        <div className="w-[114px] h-[34px] bg-[#222] border-2 border-[#333] flex items-center justify-center ml-[3px]">5:media</div>
      </div>
      <div className="ml-auto flex items-center text-white">
        <span className="text-[#ff0000]">no IPv6</span>
        {sep}
        <span className="text-[#00ff00]">W: ( 63% at v2) 192.168.1.109</span>
        {sep}
        <span className="text-[#ff0000]">E: down</span>
        {sep}
        <span>No battery</span>
        {sep}
        <span>239,0 GiB</span>
        {sep}
        <span>1,52</span>
        {sep}
        <span>9,1 GiB | 21,5 GiB</span>
        {sep}
        <span>2022-02-11 09:14:45</span>
      </div>
      <div className="ml-[14px] w-[141px] flex items-center shrink-0">
        <svg viewBox="0 0 30 28" className="w-[30px] h-[28px]" fill="none" stroke="#3b3b3b" strokeWidth="3">
          <path d="M1 9c8-8 20-8 28 0M6 14c5-5 13-5 18 0" />
          <path d="M10 19c3-3 7-3 10 0" stroke="#888" />
          <circle cx="15" cy="25" r="3" fill="#888" stroke="none" />
        </svg>
        <div className="ml-[9px] w-[22px] h-[30px] rounded-full bg-[#3f6fa8] flex items-center justify-center">
          <svg viewBox="0 0 12 22" className="w-[12px] h-[22px]" fill="none" stroke="#00ff00" strokeWidth="2">
            <path d="M1 6l10 10-5 5V1l5 5L1 16" />
          </svg>
        </div>
        <svg viewBox="0 0 28 28" className="ml-[10px] w-[28px] h-[28px]">
          <path d="M2 10h8M18 2v8M10 18h8M4 18h2M14 4v2" stroke="#fff" strokeWidth="4" />
          <circle cx="20" cy="20" r="7" fill="#1cc7ee" />
        </svg>
        <div className="ml-[8px] w-[34px] h-[22px] rounded-[8px] bg-white relative flex items-center justify-center gap-[6px]">
          <div className="w-[6px] h-[6px] rounded-full bg-black" />
          <div className="w-[6px] h-[6px] rounded-full bg-black" />
          <div className="absolute right-[-2px] top-[-6px] w-[10px] h-[10px] rounded-full bg-[#ed4245]" />
        </div>
      </div>
    </div>
  );
};

export default function App() {
  return (
    <div className="w-[3840px] h-[2160px] flex flex-col overflow-hidden bg-black">
      <div className={`h-[38px] bg-[#285577] border-t border-b border-[#4c7899] flex items-center shrink-0 text-[28.500px] leading-none text-white pl-[4px] ${mono}`}>
        Discover - Elastic - Brave
      </div>
      <div className="h-[2077px] border-l-[6px] border-l-[#285577] border-r-[5px] border-r-[#2e9ef4] flex flex-col shrink-0 bg-[#fafbfd] relative overflow-hidden">
        <TabStrip />
        <BrowserBar />
        <KibanaHeader />
        <AppNav />
        <div className={`flex-1 min-h-0 flex flex-col relative ${sans}`}>
          <QueryRow />
          <FilterRow />
          <div className="flex mt-[28px] min-h-0">
            <Sidebar />
            <HitsPanel />
          </div>
          <Tooltip />
        </div>
      </div>
      <div className="h-[5px] bg-[#285577] shrink-0" />
      <StatusBar />
    </div>
  );
}
